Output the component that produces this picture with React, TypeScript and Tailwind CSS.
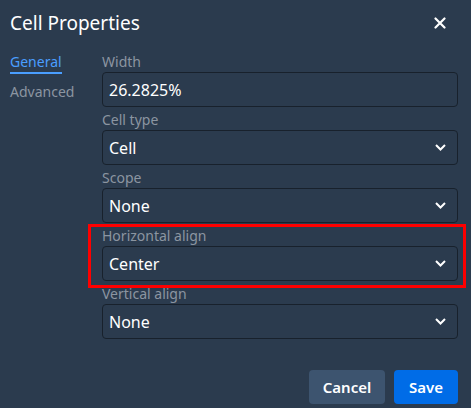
import React from "react";

const Chevron = () => (
  <svg width="11" height="7" viewBox="0 0 11 7" className="shrink-0">
    <path d="M1 1 L5.5 5.5 L10 1" fill="none" stroke="#ffffff" strokeWidth="2" />
  </svg>
);

const Field = ({ label, value, select = true }: { label: string; value: string; select?: boolean }) => (
  <div className="flex flex-col">
    <label className="h-[20px] text-[14px] leading-[20px] text-[#8b95a1]">{label}</label>
    <div className="flex h-[35px] items-center justify-between rounded-[4px] border border-[#18212c] bg-[#2b3b4e] pl-[6px] pr-[11px] text-[16px] text-white">
      <span>{value}</span>
      {select && <Chevron />}
    </div>
  </div>
);

export default function App() {
  return (
    <div
      className="h-[408px] w-[471px] overflow-hidden bg-[#2b3b4e] text-white"
      style={{ fontFamily: '"Noto Sans", "Open Sans", sans-serif' }}
    >
      <div className="flex h-[44px] items-center justify-between pl-[10px] pr-[25px] pt-[2px]">
        <h1 className="text-[19px] font-normal">Cell Properties</h1>
        <svg width="12" height="12" viewBox="0 0 12 12">
          <path d="M1.5 1.5 L10.5 10.5 M10.5 1.5 L1.5 10.5" stroke="#ffffff" strokeWidth="2.2" strokeLinecap="round" />
        </svg>
      </div>

      <div className="flex pl-[10px] pr-[13px] pt-[8px]">
        <div className="flex w-[92px] shrink-0 flex-col gap-[8px] text-[14px]">
          <span className="w-fit border-b-2 border-[#4a9eff] leading-[20px] text-[#4a9eff]">General</span>
          <span className="leading-[20px] text-[#8b95a1]">Advanced</span>
        </div>

        <div className="flex flex-1 flex-col gap-[3px]">
          <Field label="Width" value="26.2825%" select={false} />
          <Field label="Cell type" value="Cell" />
          <Field label="Scope" value="None" />
          <div className="relative">
            <div className="pointer-events-none absolute -bottom-[7px] -left-[14px] -right-[8px] -top-[2px] border-[3px] border-[#ff0000]" />
            <Field label="Horizontal align" value="Center" />
          </div>
          <Field label="Vertical align" value="None" />

          <div className="mt-[28px] flex justify-end gap-[9px]">
            <button className="h-[34px] w-[76px] rounded-[4px] bg-[#3d546f] text-[15px] font-semibold text-white">
              Cancel
            </button>
            <button className="h-[34px] w-[64px] rounded-[4px] bg-[#006ce7] text-[15px] font-semibold text-white">
              Save
            </button>
          </div>
        </div>
      </div>
    </div>
  );
}
